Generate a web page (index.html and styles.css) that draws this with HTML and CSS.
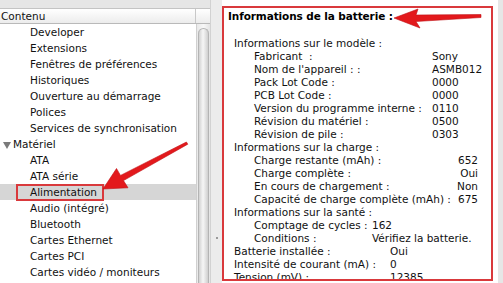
FILE: index.html
```html
<!DOCTYPE html>
<html lang="fr">
<head>
    <meta charset="UTF-8">
    <meta name="viewport" content="width=device-width, initial-scale=1.0">
    <title>Informations système - Alimentation</title>
    <link rel="stylesheet" href="styles.css">
</head>
<body>
    <div class="window">
        <div class="sidebar">
            <div class="col-head">
                <span class="col-title">Contenu</span>
                <span class="col-corner"></span>
            </div>
            <div class="list-wrap">
                <ul class="tree">
                    <li>Developer</li>
                    <li>Extensions</li>
                    <li>Fenêtres de préférences</li>
                    <li>Historiques</li>
                    <li>Ouverture au démarrage</li>
                    <li>Polices</li>
                    <li>Services de synchronisation</li>
                    <li class="cat"><span class="disclosure"></span>Matériel</li>
                    <li>ATA</li>
                    <li>ATA série</li>
                    <li class="selected"><span class="mark">Alimentation</span></li>
                    <li>Audio (intégré)</li>
                    <li>Bluetooth</li>
                    <li>Cartes Ethernet</li>
                    <li>Cartes PCI</li>
                    <li>Cartes vidéo / moniteurs</li>
                </ul>
                <div class="scroll"><div class="thumb"></div></div>
            </div>
        </div>
        <div class="splitter"><span class="grip"></span></div>
        <div class="pane">
            <div class="detail">
                <h2>Informations de la batterie :</h2>

                <div class="group-title">Informations sur le modèle :</div>
                <div class="rows model">
                    <span>Fabricant &nbsp;:</span><span>Sony</span>
                    <span>Nom de l'appareil : :</span><span>ASMB012</span>
                    <span>Pack Lot Code :</span><span>0000</span>
                    <span>PCB Lot Code :</span><span>0000</span>
                    <span>Version du programme interne :</span><span>0110</span>
                    <span>Révision du matériel :</span><span>0500</span>
                    <span>Révision de pile :</span><span>0303</span>
                </div>

                <div class="group-title">Informations sur la charge :</div>
                <div class="rows charge">
                    <span>Charge restante (mAh) :</span><span class="num">652</span>
                    <span>Charge complète :</span><span class="num">Oui</span>
                    <span>En cours de chargement :</span><span class="num">Non</span>
                    <span>Capacité de charge complète (mAh) :</span><span class="num">675</span>
                </div>

                <div class="group-title">Informations sur la santé :</div>
                <div class="rows health">
                    <span>Comptage de cycles :</span><span>162</span>
                    <span>Conditions :</span><span>Vérifiez la batterie.</span>
                </div>

                <div class="rows top">
                    <span>Batterie installée :</span><span>Oui</span>
                    <span>Intensité de courant (mA) :</span><span>0</span>
                    <span>Tension (mV) :</span><span>12385</span>
                </div>
            </div>
        </div>
    </div>

    <!-- flèches rouges par-dessus la capture -->
    <svg class="arrows" width="503" height="283" viewBox="0 0 503 283">
        <polygon points="394,18 418,9 416,15 481,14.5 481,17.5 416,21.5 420,28" />
        <polygon points="103,189 116.5,168.5 120.5,175.4 186.4,142 187.8,144.2 123.5,180.6 128,187.8" />
    </svg>
</body>
</html>
```

FILE: styles.css
```css
body {
    margin: 0;
    padding: 0;
    width: 503px;
    height: 283px;
    overflow: hidden;
    background: #e6e6e6;
    font-family: "DejaVu Sans", Verdana, sans-serif;
    font-size: 10.5px;
    color: #111;
    position: relative;
}
.window {
    display: flex;
    height: 283px;
}

/* colonne de gauche */
.sidebar {
    width: 210px;
    margin-top: 8px;
    display: flex;
    flex-direction: column;
    background: #fff;
}
.col-head {
    display: flex;
    height: 14px;
    line-height: 14px;
    border-top: 1px solid #c4c4c4;
    border-bottom: 1px solid #b9b9b9;
    background: linear-gradient(#ffffff, #ececec);
}
.col-title {
    width: 196px;
    padding-left: 1px;
    border-right: 1px solid #c8c8c8;
    box-sizing: border-box;
}
.col-corner {
    flex: 1;
}
.list-wrap {
    flex: 1;
    display: flex;
    overflow: hidden;
}
.tree {
    list-style: none;
    margin: 0;
    padding: 0;
    width: 196px;
}
.tree li {
    height: 16px;
    line-height: 16px;
    padding-left: 30px;
    white-space: nowrap;
}
.tree li.cat {
    padding-left: 3px;
}
.disclosure {
    display: inline-block;
    width: 0;
    height: 0;
    border-left: 4px solid transparent;
    border-right: 4px solid transparent;
    border-top: 7px solid #7a7a7a;
    margin-right: 2px;
    vertical-align: -1px;
}
.tree li.selected {
    background: #d6d6d6;
}
.mark {
    display: inline-block;
    height: 13px;
    line-height: 13px;
    margin-left: -14px;
    padding: 0 5px 0 12px;
    border: 2px solid #d9393c;
}
.scroll {
    width: 14px;
    background: linear-gradient(90deg, #e9e9e9, #f7f7f7 50%, #e4e4e4);
    border-left: 1px solid #d0d0d0;
    box-sizing: border-box;
    padding: 4px 1px 0 1px;
}
.thumb {
    height: 260px;
    border-radius: 6px 6px 0 0;
    border: 1px solid #b4b4b4;
    border-bottom: none;
    background: linear-gradient(90deg, #d2d2d2, #f6f6f6 45%, #cfcfcf);
}

/* séparateur */
.splitter {
    width: 12px;
    background: #ececec;
    border-left: 1px solid #d2d2d2;
    box-sizing: border-box;
    display: flex;
    align-items: flex-start;
    justify-content: center;
}
.grip {
    margin-top: 237px;
    width: 2px;
    height: 2px;
    background: #9a9a9a;
}

/* panneau de droite */
.pane {
    width: 276px;
    background: #fff;
    padding-top: 6px;
}
.detail {
    width: 271px;
    height: 275px;
    box-sizing: border-box;
    border: 2px solid #d9393c;
    padding: 2px 0 0 4px;
    line-height: 13px;
    overflow: hidden;
}
.detail h2 {
    margin: 0 0 14px;
    font-size: 10.5px;
    line-height: 13px;
    font-weight: bold;
    color: #000;
    letter-spacing: -0.1px;
}
.group-title {
    padding-left: 6px;
}
.rows {
    display: grid;
    padding-left: 26px;
    white-space: nowrap;
}
.rows.model {
    grid-template-columns: 178px auto;
}
.rows.charge {
    grid-template-columns: 200px 24px;
}
.rows.charge .num {
    text-align: right;
}
.rows.health {
    grid-template-columns: 118px auto;
}
.rows.top {
    padding-left: 6px;
    grid-template-columns: 156px auto;
}

/* flèches */
.arrows {
    position: absolute;
    top: 0;
    left: 0;
    pointer-events: none;
}
.arrows polygon {
    fill: #e3191c;
    stroke: #c01015;
    stroke-width: 0.6;
}
```
